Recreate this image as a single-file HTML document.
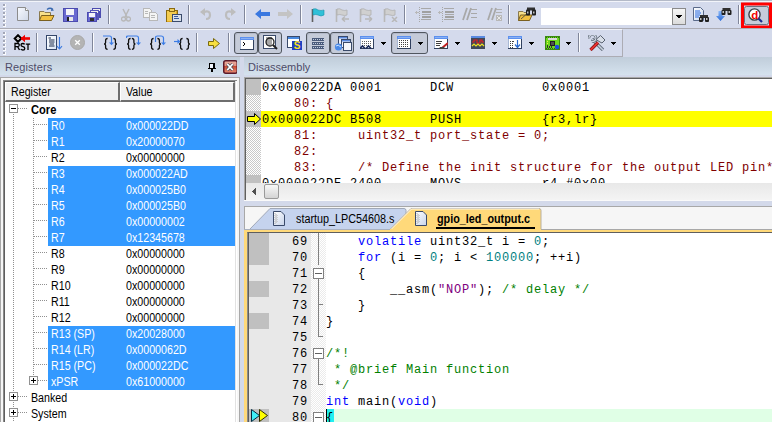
<!DOCTYPE html><html><head><meta charset="utf-8"><title>uVision</title><style>
*{margin:0;padding:0;box-sizing:border-box}
html,body{width:772px;height:422px;overflow:hidden;background:#D3D9EA;font-family:"Liberation Sans",sans-serif;font-size:11px;color:#000}
body{position:relative}
div,span,svg{position:absolute;display:block}
i{font-style:normal}
.sep{width:1px;background:#80869A;border-right:1px solid #FAFBFE;box-sizing:content-box}
.ttl{background:linear-gradient(#C0CDDA,#D5E2EE);color:#4E4C68;font-size:11.5px}
.mono{font-family:"Liberation Mono",monospace;font-size:12px;letter-spacing:.8px;white-space:pre;line-height:16px;padding-top:1px}
.sans{white-space:pre;line-height:14px;transform-origin:0 0}
.rg{font-size:12px;transform:scaleX(.89)}
.chk{background-color:#fff;background-image:linear-gradient(45deg,#C8C8C8 25%,transparent 25%,transparent 75%,#C8C8C8 75%),linear-gradient(45deg,#C8C8C8 25%,transparent 25%,transparent 75%,#C8C8C8 75%);background-size:2px 2px;background-position:0 0,1px 1px}
</style></head><body>
<div style="left:0;top:0;width:772px;height:1px;background:#B4BAC8"></div>
<div style="left:0;top:1px;width:772px;height:28px;background:#D4DAEC;border-top:1px solid #F2F4FA;border-bottom:1px solid #ACACB4"></div>
<div style="left:0;top:29px;width:623px;height:28px;background:#D4DAEC;border-top:1px solid #F2F4FA;border-bottom:1px solid #ACACB4;border-right:1px solid #ACACB4"></div>
<div style="left:3px;top:4px;width:3px;height:3px;background:#FAFBFE"></div><div style="left:3px;top:4px;width:2px;height:2px;background:#A2A6B6"></div>
<div style="left:3px;top:8px;width:3px;height:3px;background:#FAFBFE"></div><div style="left:3px;top:8px;width:2px;height:2px;background:#A2A6B6"></div>
<div style="left:3px;top:12px;width:3px;height:3px;background:#FAFBFE"></div><div style="left:3px;top:12px;width:2px;height:2px;background:#A2A6B6"></div>
<div style="left:3px;top:16px;width:3px;height:3px;background:#FAFBFE"></div><div style="left:3px;top:16px;width:2px;height:2px;background:#A2A6B6"></div>
<div style="left:3px;top:20px;width:3px;height:3px;background:#FAFBFE"></div><div style="left:3px;top:20px;width:2px;height:2px;background:#A2A6B6"></div>
<div style="left:3px;top:24px;width:3px;height:3px;background:#FAFBFE"></div><div style="left:3px;top:24px;width:2px;height:2px;background:#A2A6B6"></div>
<div style="left:3px;top:32px;width:3px;height:3px;background:#FAFBFE"></div><div style="left:3px;top:32px;width:2px;height:2px;background:#A2A6B6"></div>
<div style="left:3px;top:36px;width:3px;height:3px;background:#FAFBFE"></div><div style="left:3px;top:36px;width:2px;height:2px;background:#A2A6B6"></div>
<div style="left:3px;top:40px;width:3px;height:3px;background:#FAFBFE"></div><div style="left:3px;top:40px;width:2px;height:2px;background:#A2A6B6"></div>
<div style="left:3px;top:44px;width:3px;height:3px;background:#FAFBFE"></div><div style="left:3px;top:44px;width:2px;height:2px;background:#A2A6B6"></div>
<div style="left:3px;top:48px;width:3px;height:3px;background:#FAFBFE"></div><div style="left:3px;top:48px;width:2px;height:2px;background:#A2A6B6"></div>
<div style="left:3px;top:52px;width:3px;height:3px;background:#FAFBFE"></div><div style="left:3px;top:52px;width:2px;height:2px;background:#A2A6B6"></div>
<div class="sep" style="left:108px;top:5px;height:19px"></div>
<div class="sep" style="left:188px;top:5px;height:19px"></div>
<div class="sep" style="left:244px;top:5px;height:19px"></div>
<div class="sep" style="left:300px;top:5px;height:19px"></div>
<div class="sep" style="left:404px;top:5px;height:19px"></div>
<div class="sep" style="left:508px;top:5px;height:19px"></div>
<div class="sep" style="left:738px;top:5px;height:19px"></div>
<div class="sep" style="left:36px;top:33px;height:19px"></div>
<div class="sep" style="left:92px;top:33px;height:19px"></div>
<div class="sep" style="left:196px;top:33px;height:19px"></div>
<div class="sep" style="left:228px;top:33px;height:19px"></div>
<div class="sep" style="left:578px;top:33px;height:19px"></div>
<svg style="left:16px;top:6px" width="14" height="16" viewBox="0 0 14 16"><defs><linearGradient id="gnd" x1="0" y1="0" x2="1" y2="1"><stop offset="0" stop-color="#F8FAFF"/><stop offset="1" stop-color="#D0D8E8"/></linearGradient></defs><path d="M1.5 1.5H9.5L12.5 4.5V14.5H1.5Z" fill="url(#gnd)" stroke="#8C8C8C"/><path d="M9.5 1.5V4.5H12.5" fill="#fff" stroke="#8C8C8C"/></svg>
<svg style="left:38px;top:7px" width="17" height="15" viewBox="0 0 17 15"><path d="M1.5 4.5H6L7 5.5H12.5V13.5H1.5Z" fill="#F8E08A" stroke="#8A7A50"/><path d="M3.5 8.5H16L13.5 13.5H1.5Z" fill="#F2C040" stroke="#7A6020"/><path d="M9 2.5Q12 0 15 2.5" fill="none" stroke="#3A6AB0" stroke-width="1.3"/><path d="M13.5 1L16 3.5L13 4Z" fill="#3A6AB0"/></svg>
<svg style="left:63px;top:8px" width="15" height="14" viewBox="0 0 15 14" shape-rendering="crispEdges"><rect x="0" y="0" width="15" height="14" fill="#4C4CB0"/><rect x="1" y="1" width="13" height="12" fill="#6A6AD0"/><rect x="3" y="1" width="8" height="6" fill="#F4F4F8"/><rect x="4" y="9" width="6" height="4" fill="#E8E8E8"/><rect x="4" y="9" width="2" height="4" fill="#202020"/></svg>
<svg style="left:87px;top:8px" width="14" height="14" viewBox="0 0 14 14" shape-rendering="crispEdges"><rect x="5" y="0" width="9" height="10" fill="#4C4CB0"/><rect x="6" y="1" width="7" height="2" fill="#EEE"/><rect x="3" y="2" width="9" height="10" fill="#5656B8"/><rect x="4" y="3" width="7" height="2" fill="#EEE"/><rect x="0" y="4" width="10" height="10" fill="#4C4CB0"/><rect x="1" y="5" width="8" height="8" fill="#6A6AD0"/><rect x="2" y="5" width="6" height="4" fill="#F4F4F8"/><rect x="3" y="10" width="4" height="3" fill="#303030"/></svg>
<svg style="left:121px;top:8px" width="10" height="14" viewBox="0 0 10 14"><path d="M2 1L6 9M8 1L4 9" stroke="#B8B8B8" stroke-width="1.5"/><circle cx="2.5" cy="11" r="2" fill="none" stroke="#B8B8B8" stroke-width="1.3"/><circle cx="7.5" cy="11" r="2" fill="none" stroke="#B8B8B8" stroke-width="1.3"/></svg>
<svg style="left:143px;top:8px" width="15" height="13" viewBox="0 0 15 13" shape-rendering="crispEdges"><path d="M0 0H6L8 2V9H0Z" fill="#F4F4F4" stroke="#B8B8B8"/><path d="M6 4H12L14 6V12H6Z" fill="#F4F4F4" stroke="#B8B8B8"/><path d="M8 7H12M8 9H12M2 3H5M2 5H5" stroke="#B8B8B8"/></svg>
<svg style="left:166px;top:8px" width="16" height="14" viewBox="0 0 16 14" shape-rendering="crispEdges"><rect x="0" y="2" width="11" height="12" fill="#E0A820" stroke="#8A6A10"/><rect x="1" y="3" width="9" height="10" fill="#F4CC50"/><rect x="3" y="0" width="5" height="3" fill="#F0D060" stroke="#8A6A10"/><rect x="6" y="6" width="9" height="7" fill="#D8E0EA" stroke="#3A4A6A"/><path d="M8 8H12M8 10H13" stroke="#3A5A9A"/></svg>
<svg style="left:200px;top:8px" width="12" height="13" viewBox="0 0 12 13"><g ><path d="M4 4Q10 2 10 7Q10 11 6 11" fill="none" stroke="#BDBDBD" stroke-width="2.2"/><path d="M0 4L5 0V8Z" fill="#BDBDBD"/></g></svg>
<svg style="left:224px;top:8px" width="12" height="13" viewBox="0 0 12 13"><g transform="translate(12 0) scale(-1 1)"><path d="M4 4Q10 2 10 7Q10 11 6 11" fill="none" stroke="#BDBDBD" stroke-width="2.2"/><path d="M0 4L5 0V8Z" fill="#BDBDBD"/></g></svg>
<svg style="left:255px;top:9px" width="15" height="10" viewBox="0 0 15 10"><path d="M0 5L6 0V3H15V7H6V10Z" fill="#3A78E0"/></svg>
<svg style="left:278px;top:9px" width="15" height="10" viewBox="0 0 15 10"><path d="M15 5L9 0V3H0V7H9V10Z" fill="#C4C4C4"/></svg>
<svg style="left:311px;top:8px" width="14" height="14" viewBox="0 0 14 14"><path d="M1.5 1V14" stroke="#606060" stroke-width="1.6"/><path d="M2 1Q5 0 7 2Q10 3 13 2V7Q10 9 7 7Q5 6 2 7Z" fill="#30C0D8" stroke="#1890A8" stroke-width=".6"/></svg>
<svg style="left:335px;top:8px" width="15" height="14" viewBox="0 0 15 14"><path d="M1.5 1V14" stroke="#B8B8B8" stroke-width="1.6"/><path d="M2 1Q5 0 7 2Q10 3 12 2V7Q10 8 7 7Q5 6 2 7Z" fill="#D0D0D0" stroke="#B0B0B0" stroke-width=".8"/><path d="M7 11H14M7 11L10 8.5M7 11L10 13.5" stroke="#B8B8B8" stroke-width="1.5" fill="none"/></svg>
<svg style="left:359px;top:8px" width="15" height="14" viewBox="0 0 15 14"><path d="M1.5 1V14" stroke="#B8B8B8" stroke-width="1.6"/><path d="M2 1Q5 0 7 2Q10 3 12 2V7Q10 8 7 7Q5 6 2 7Z" fill="#D0D0D0" stroke="#B0B0B0" stroke-width=".8"/><path d="M6 11H13M13 11L10 8.5M13 11L10 13.5" stroke="#B8B8B8" stroke-width="1.5" fill="none"/></svg>
<svg style="left:383px;top:8px" width="15" height="14" viewBox="0 0 15 14"><path d="M1.5 1V14" stroke="#B8B8B8" stroke-width="1.6"/><path d="M2 1Q5 0 7 2Q10 3 12 2V7Q10 8 7 7Q5 6 2 7Z" fill="#D0D0D0" stroke="#B0B0B0" stroke-width=".8"/><path d="M9 9L14 14M14 9L9 14" stroke="#B8B8B8" stroke-width="1.5"/></svg>
<svg style="left:415px;top:7px" width="16" height="15" viewBox="0 0 16 15" shape-rendering="crispEdges"><rect x="6" y="1" width="10" height="1" fill="#A8A8A8"/><rect x="7" y="4" width="9" height="2" fill="#A0A0A0"/><rect x="7" y="7" width="9" height="1" fill="#A8A8A8"/><rect x="7" y="9" width="9" height="2" fill="#A0A0A0"/><rect x="6" y="12" width="10" height="1" fill="#A8A8A8"/><rect x="0" y="5" width="4" height="1" fill="#B8B8B8"/><rect x="1" y="4" width="1" height="3" fill="#B8B8B8"/><rect x="4" y="0" width="1" height="1" fill="#A8A8A8"/><rect x="4" y="2" width="1" height="1" fill="#A8A8A8"/><rect x="4" y="4" width="1" height="1" fill="#A8A8A8"/><rect x="4" y="6" width="1" height="1" fill="#A8A8A8"/><rect x="4" y="8" width="1" height="1" fill="#A8A8A8"/><rect x="4" y="10" width="1" height="1" fill="#A8A8A8"/><rect x="4" y="12" width="1" height="1" fill="#A8A8A8"/><rect x="4" y="14" width="1" height="1" fill="#A8A8A8"/></svg>
<svg style="left:438px;top:7px" width="16" height="15" viewBox="0 0 16 15" shape-rendering="crispEdges"><rect x="6" y="1" width="10" height="1" fill="#A8A8A8"/><rect x="7" y="4" width="9" height="2" fill="#A0A0A0"/><rect x="7" y="7" width="9" height="1" fill="#A8A8A8"/><rect x="7" y="9" width="9" height="2" fill="#A0A0A0"/><rect x="6" y="12" width="10" height="1" fill="#A8A8A8"/><rect x="0" y="5" width="4" height="1" fill="#B8B8B8"/><rect x="1" y="4" width="1" height="3" fill="#B8B8B8"/><rect x="4" y="0" width="1" height="1" fill="#A8A8A8"/><rect x="4" y="2" width="1" height="1" fill="#A8A8A8"/><rect x="4" y="4" width="1" height="1" fill="#A8A8A8"/><rect x="4" y="6" width="1" height="1" fill="#A8A8A8"/><rect x="4" y="8" width="1" height="1" fill="#A8A8A8"/><rect x="4" y="10" width="1" height="1" fill="#A8A8A8"/><rect x="4" y="12" width="1" height="1" fill="#A8A8A8"/><rect x="4" y="14" width="1" height="1" fill="#A8A8A8"/></svg>
<svg style="left:462px;top:7px" width="16" height="14" viewBox="0 0 16 14"><path d="M1 13L5 1M5 13L9 1" stroke="#A8A8A8" stroke-width="1.8"/><path d="M9 2.5H15M9 6.5H15M9 10.5H15" stroke="#A8A8A8" stroke-width="1.2"/></svg>
<svg style="left:487px;top:7px" width="16" height="14" viewBox="0 0 16 14"><path d="M1 13L5 1M5 13L9 1" stroke="#A8A8A8" stroke-width="1.8"/><path d="M9 2.5H15M9 5.5H15" stroke="#B0B0B0" stroke-width="1"/><rect x="9" y="8" width="6" height="6" fill="#B8B8B8"/><path d="M10 9L14 13M14 9L10 13" stroke="#E8E8E8" stroke-width="1"/></svg>
<svg style="left:518px;top:7px" width="18" height="15" viewBox="0 0 18 15"><path d="M0.5 4.5H5L6 5.5H11V13.5H0.5Z" fill="#F8E08A" stroke="#8A7A50"/><path d="M2.5 8H14L11.5 13.5H0.5Z" fill="#F2C040" stroke="#7A6020"/><path d="M3 12L12 4" stroke="#404040" stroke-width=".8"/><g transform="translate(13 4.5)"><rect x="-4" y="-4" width="8" height="3" fill="#303030"/><rect x="-5" y="-2" width="4" height="6" rx="1" fill="#202020"/><rect x="1" y="-2" width="4" height="6" rx="1" fill="#202020"/><rect x="-4" y="0" width="1.5" height="2" fill="#C0C0C0"/><rect x="2" y="0" width="1.5" height="2" fill="#C0C0C0"/></g></svg>
<div style="left:541px;top:8px;width:145px;height:17px;background:#fff"></div><div style="left:672px;top:8px;width:14px;height:17px;background:linear-gradient(#F6F6F6,#DCDCDC);border:1px solid #8A8A8A"></div><svg style="left:676px;top:15px" width="6" height="4" viewBox="0 0 6 4" shape-rendering="crispEdges"><path d="M0 0H6L3 4Z" fill="#000"/></svg>
<svg style="left:693px;top:7px" width="17" height="15" viewBox="0 0 17 15"><defs><linearGradient id="gff" x1="0" y1="0" x2="1" y2="1"><stop offset="0" stop-color="#fff"/><stop offset="1" stop-color="#C8D8F0"/></linearGradient></defs><path d="M0.5 0.5H7.5L10.5 3.5V13.5H0.5Z" fill="url(#gff)" stroke="#5A6A8A"/><path d="M2 4H7M2 6H8M2 8H7M2 10H6" stroke="#2A6AE0" stroke-width="1"/><g transform="translate(11 11) scale(1.0)"><rect x="-4" y="-3" width="8" height="3" fill="#303030"/><rect x="-5" y="-1" width="4" height="5" rx="1" fill="#202020"/><rect x="1" y="-1" width="4" height="5" rx="1" fill="#202020"/><rect x="-4" y="0" width="1.5" height="2" fill="#C0C0C0"/><rect x="2" y="0" width="1.5" height="2" fill="#C0C0C0"/></g></svg>
<svg style="left:716px;top:7px" width="17" height="15" viewBox="0 0 17 15"><defs><linearGradient id="gba" x1="0" y1="0" x2="0" y2="1"><stop offset="0" stop-color="#8AB8F8"/><stop offset="1" stop-color="#2A6AD8"/></linearGradient></defs><path d="M2.5 4H6.5V9H9L4.5 14L0 9H2.5Z" fill="url(#gba)"/><g transform="translate(10.5 4) scale(1.0)"><rect x="-4" y="-3" width="8" height="3" fill="#303030"/><rect x="-5" y="-1" width="4" height="5" rx="1" fill="#202020"/><rect x="1" y="-1" width="4" height="5" rx="1" fill="#202020"/><rect x="-4" y="0" width="1.5" height="2" fill="#C0C0C0"/><rect x="2" y="0" width="1.5" height="2" fill="#C0C0C0"/></g></svg>
<svg style="left:740px;top:2px" width="32" height="26" viewBox="0 0 32 26"><rect x="2.5" y="2" width="28" height="23" fill="none" stroke="#FF0000" stroke-width="3"/><rect x="4.5" y="4.5" width="24" height="18" rx="2" fill="#C6CCDA" stroke="#6A7280"/><circle cx="14.5" cy="12.5" r="5.6" fill="#fff" stroke="#3A4048" stroke-width="1.4"/><path d="M18.5 16.5L22 20" stroke="#1A2A90" stroke-width="2.2"/><text x="14.7" y="16.8" text-anchor="middle" font-family="Liberation Sans" font-weight="bold" font-size="11.5" fill="#F00000">d</text></svg>
<svg style="left:13px;top:34px" width="18" height="17" viewBox="0 0 18 17"><path d="M5 1.2L8.3 4.5L5 7.8L1.7 4.5Z" fill="#fff" stroke="#000" stroke-width="2"/><rect x="4" y="3.5" width="2" height="2" fill="#C0C0C0"/><path d="M8 4.5H17" stroke="#F00000" stroke-width="2.6"/><path d="M7.5 4.5L12 0.8V8.2Z" fill="#F00000"/><path d="M2 16V9.5H4.8Q6.3 9.5 6.3 11.1Q6.3 12.6 4.8 12.6H2M4.6 12.6L6.5 16" fill="none" stroke="#000" stroke-width="1.3"/><path d="M11.6 10.3Q11 9.5 9.8 9.5Q8 9.5 8 11Q8 12.3 9.9 12.6Q11.8 13 11.8 14.4Q11.8 16 9.9 16Q8.5 16 7.8 15" fill="none" stroke="#000" stroke-width="1.3"/><path d="M12.8 10.1H17.2M15 10.1V16" fill="none" stroke="#000" stroke-width="1.3"/></svg>
<svg style="left:46px;top:35px" width="17" height="15" viewBox="0 0 17 15"><defs><linearGradient id="gda" x1="0" y1="0" x2="1" y2="1"><stop offset="0" stop-color="#fff"/><stop offset="1" stop-color="#D8E4F4"/></linearGradient></defs><rect x="0.5" y="0.5" width="10" height="14" fill="url(#gda)" stroke="#34466A"/><path d="M2.5 3H5M3 5H8.5M3 7H8.5M3.5 9H8M3 11H8.5" stroke="#1A2A4A" stroke-width="1"/><path d="M13.5 2V14" stroke="#3A7AE0" stroke-width="1.1"/><path d="M11 11.2L13.5 14L16 11.2" fill="none" stroke="#3A7AE0" stroke-width="1.1"/></svg>
<svg style="left:70px;top:35px" width="15" height="15" viewBox="0 0 15 15"><circle cx="7.5" cy="7.5" r="7" fill="#B4B4B4" stroke="#A8A8A8"/><path d="M5.2 5.2L9.8 9.8M9.8 5.2L5.2 9.8" stroke="#fff" stroke-width="1.3"/></svg>
<svg style="left:103px;top:34px" width="17" height="17" viewBox="0 0 17 17"><path d="M4.6 4.5Q2.6 4.5 2.6 6.5V8.5Q2.6 9.8 1.2 10Q2.6 10.2 2.6 11.5V13.5Q2.6 15.3 4.6 15.3" fill="none" stroke="#101010" stroke-width="1.3"/><path d="M10.4 4.5Q12.4 4.5 12.4 6.5V8.5Q12.4 9.8 13.8 10Q12.4 10.2 12.4 11.5V13.5Q12.4 15.3 10.4 15.3" fill="none" stroke="#101010" stroke-width="1.3"/><path d="M0 2H6.5Q8.5 2 8.5 4V9" fill="none" stroke="#3C7DE6" stroke-width="1.2"/><path d="M6 8.5H11L8.5 11.2Z" fill="#3C7DE6"/></svg>
<svg style="left:126px;top:34px" width="17" height="17" viewBox="0 0 17 17"><path d="M4.6 4.5Q2.6 4.5 2.6 6.5V8.5Q2.6 9.8 1.2 10Q2.6 10.2 2.6 11.5V13.5Q2.6 15.3 4.6 15.3" fill="none" stroke="#101010" stroke-width="1.3"/><path d="M5.9 4.5Q7.9 4.5 7.9 6.5V8.5Q7.9 9.8 9.3 10Q7.9 10.2 7.9 11.5V13.5Q7.9 15.3 5.9 15.3" fill="none" stroke="#101010" stroke-width="1.3"/><path d="M0.5 4V3Q0.5 2 2 2H10.5Q12.5 2 12.5 4V9" fill="none" stroke="#3C7DE6" stroke-width="1.2"/><path d="M10 8.5H15L12.5 11.2Z" fill="#3C7DE6"/></svg>
<svg style="left:150px;top:34px" width="17" height="17" viewBox="0 0 17 17"><path d="M3.6 4.5Q1.6 4.5 1.6 6.5V8.5Q1.6 9.8 0.2 10Q1.6 10.2 1.6 11.5V13.5Q1.6 15.3 3.6 15.3" fill="none" stroke="#101010" stroke-width="1.3"/><path d="M7.4 4.5Q9.4 4.5 9.4 6.5V8.5Q9.4 9.8 10.8 10Q9.4 10.2 9.4 11.5V13.5Q9.4 15.3 7.4 15.3" fill="none" stroke="#101010" stroke-width="1.3"/><path d="M5.5 8V4Q5.5 2 7.5 2H11Q13.5 2 13.5 4V9" fill="none" stroke="#3C7DE6" stroke-width="1.2"/><path d="M11 8.5H16L13.5 11.2Z" fill="#3C7DE6"/></svg>
<svg style="left:174px;top:34px" width="17" height="17" viewBox="0 0 17 17"><path d="M8.6 4.5Q6.6 4.5 6.6 6.5V8.5Q6.6 9.8 5.2 10Q6.6 10.2 6.6 11.5V13.5Q6.6 15.3 8.6 15.3" fill="none" stroke="#101010" stroke-width="1.3"/><path d="M12.4 4.5Q14.4 4.5 14.4 6.5V8.5Q14.4 9.8 15.8 10Q14.4 10.2 14.4 11.5V13.5Q14.4 15.3 12.4 15.3" fill="none" stroke="#101010" stroke-width="1.3"/><path d="M0 7.5H5" fill="none" stroke="#3C7DE6" stroke-width="1.2"/><path d="M3.5 5L6.5 7.5L3.5 10Z" fill="#3C7DE6"/></svg>
<svg style="left:208px;top:38px" width="12" height="11" viewBox="0 0 12 11"><path d="M0.5 3.5H5.5V0.5L11.5 5.5L5.5 10.5V7.5H0.5Z" fill="#F8E040" stroke="#7A6A10"/></svg>
<div style="left:234px;top:32px;width:24px;height:22px;border:1px solid #50565F;border-radius:3px;background:#C5CBD9;box-shadow:inset 1px 1px 0 #B4BACA"></div>
<div style="left:258px;top:32px;width:24px;height:22px;border:1px solid #50565F;border-radius:3px;background:#C5CBD9;box-shadow:inset 1px 1px 0 #B4BACA"></div>
<div style="left:306px;top:32px;width:24px;height:22px;border:1px solid #50565F;border-radius:3px;background:#C5CBD9;box-shadow:inset 1px 1px 0 #B4BACA"></div>
<div style="left:330px;top:32px;width:24px;height:22px;border:1px solid #50565F;border-radius:3px;background:#C5CBD9;box-shadow:inset 1px 1px 0 #B4BACA"></div>
<div style="left:391px;top:32px;width:37px;height:22px;border:1px solid #50565F;border-radius:3px;background:#C5CBD9;box-shadow:inset 1px 1px 0 #B4BACA"></div>
<svg style="left:240px;top:37px" width="14" height="13" viewBox="0 0 14 13" shape-rendering="crispEdges"><rect x="0" y="0" width="14" height="13" fill="#30405E"/><rect x="0" y="0" width="13" height="12" fill="#A8B8D4"/><rect x="1" y="3" width="12" height="9" fill="#fff"/><rect x="0" y="0" width="14" height="3" fill="#5C90EE"/><rect x="1" y="1" width="12" height="1" fill="#8AB0F4"/><path d="M3 5L5 7L3 9" fill="none" stroke="#000" shape-rendering="auto"/></svg>
<svg style="left:263px;top:35px" width="15" height="15" viewBox="0 0 15 15"><rect x="0.5" y="0.5" width="12" height="13" fill="#fff" stroke="#3A4A6A"/><path d="M3 3H9M3 5H9M3 7H9M3 9H9" stroke="#505050"/><circle cx="7" cy="7" r="4" fill="none" stroke="#202020" stroke-width="1.3"/><path d="M10 10L14 14" stroke="#202020" stroke-width="2"/></svg>
<svg style="left:287px;top:36px" width="15" height="14" viewBox="0 0 15 14"><rect x="0.5" y="0.5" width="12" height="11" fill="#fff" stroke="#3A4A6A"/><rect x="1" y="1" width="11" height="2" fill="#4A8AE0"/><rect x="5" y="5" width="10" height="9" fill="#2040C0"/><text x="10" y="13" text-anchor="middle" font-family="Liberation Sans" font-weight="bold" font-size="10" fill="#F8E020">S</text></svg>
<svg style="left:311px;top:37px" width="14" height="13" viewBox="0 0 14 13" shape-rendering="crispEdges"><rect x="1" y="1" width="12" height="3" fill="#4A5A7A"/><rect x="1" y="5" width="12" height="3" fill="#4A5A7A"/><rect x="1" y="9" width="12" height="3" fill="#4A5A7A"/><rect x="2" y="2" width="1" height="1" fill="#C0CCE0"/><rect x="4" y="2" width="1" height="1" fill="#C0CCE0"/><rect x="6" y="2" width="1" height="1" fill="#C0CCE0"/><rect x="8" y="2" width="1" height="1" fill="#C0CCE0"/><rect x="10" y="2" width="1" height="1" fill="#C0CCE0"/><rect x="12" y="2" width="1" height="1" fill="#C0CCE0"/><rect x="2" y="6" width="1" height="1" fill="#C0CCE0"/><rect x="4" y="6" width="1" height="1" fill="#C0CCE0"/><rect x="6" y="6" width="1" height="1" fill="#C0CCE0"/><rect x="8" y="6" width="1" height="1" fill="#C0CCE0"/><rect x="10" y="6" width="1" height="1" fill="#C0CCE0"/><rect x="12" y="6" width="1" height="1" fill="#C0CCE0"/><rect x="2" y="10" width="1" height="1" fill="#C0CCE0"/><rect x="4" y="10" width="1" height="1" fill="#C0CCE0"/><rect x="6" y="10" width="1" height="1" fill="#C0CCE0"/><rect x="8" y="10" width="1" height="1" fill="#C0CCE0"/><rect x="10" y="10" width="1" height="1" fill="#C0CCE0"/><rect x="12" y="10" width="1" height="1" fill="#C0CCE0"/></svg>
<svg style="left:334px;top:35px" width="18" height="17" viewBox="0 0 18 17"><rect x="4.5" y="1.5" width="9" height="8" fill="#EEF2FA" stroke="#3A4A6A"/><rect x="5" y="2" width="8" height="1.5" fill="#5A8AE0"/><rect x="7.5" y="4.5" width="9" height="8" fill="#EEF2FA" stroke="#3A4A6A"/><rect x="8" y="5" width="8" height="1.5" fill="#5A8AE0"/><rect x="9.5" y="7.5" width="8" height="8" fill="#F4F6FA" stroke="#3A4A6A"/><circle cx="4.5" cy="12" r="3.6" fill="#4A8AE8"/><path d="M2 11Q4 9 7 12" stroke="#C8E0FF" fill="none"/></svg>
<svg style="left:360px;top:36px" width="14" height="13" viewBox="0 0 14 13" shape-rendering="crispEdges"><rect x="0" y="0" width="14" height="13" fill="#30405E"/><rect x="0" y="0" width="13" height="12" fill="#A8B8D4"/><rect x="1" y="3" width="12" height="9" fill="#fff"/><rect x="0" y="0" width="14" height="3" fill="#5C90EE"/><rect x="1" y="1" width="12" height="1" fill="#8AB0F4"/><rect x="2" y="5" width="1" height="1" fill="#606060"/><rect x="2" y="7" width="1" height="1" fill="#606060"/><rect x="2" y="9" width="1" height="1" fill="#606060"/><rect x="4" y="5" width="1" height="1" fill="#606060"/><rect x="4" y="7" width="1" height="1" fill="#606060"/><rect x="4" y="9" width="1" height="1" fill="#606060"/><rect x="6" y="5" width="1" height="1" fill="#606060"/><rect x="6" y="7" width="1" height="1" fill="#606060"/><rect x="6" y="9" width="1" height="1" fill="#606060"/><rect x="8" y="5" width="1" height="1" fill="#606060"/><rect x="8" y="7" width="1" height="1" fill="#606060"/><rect x="8" y="9" width="1" height="1" fill="#606060"/><rect x="10" y="5" width="1" height="1" fill="#606060"/><rect x="10" y="7" width="1" height="1" fill="#606060"/><rect x="10" y="9" width="1" height="1" fill="#606060"/><path d="M0 12.5L2.5 10L5 12.5M6 12.5L8.5 10L11 12.5" fill="none" stroke="#1A2A5A" stroke-width="1.6" shape-rendering="auto"/></svg>
<svg style="left:381px;top:42px" width="5" height="3" viewBox="0 0 5 3" shape-rendering="crispEdges"><path d="M0 0H5L2.5 3Z" fill="#000"/></svg>
<svg style="left:397px;top:36px" width="14" height="13" viewBox="0 0 14 13" shape-rendering="crispEdges"><rect x="0" y="0" width="14" height="13" fill="#30405E"/><rect x="0" y="0" width="13" height="12" fill="#A8B8D4"/><rect x="1" y="3" width="12" height="9" fill="#fff"/><rect x="0" y="0" width="14" height="3" fill="#5C90EE"/><rect x="1" y="1" width="12" height="1" fill="#8AB0F4"/><rect x="2" y="4" width="1" height="1" fill="#404040"/><rect x="2" y="6" width="1" height="1" fill="#404040"/><rect x="2" y="8" width="1" height="1" fill="#404040"/><rect x="2" y="10" width="1" height="1" fill="#404040"/><rect x="4" y="4" width="1" height="1" fill="#404040"/><rect x="4" y="6" width="1" height="1" fill="#404040"/><rect x="4" y="8" width="1" height="1" fill="#404040"/><rect x="4" y="10" width="1" height="1" fill="#404040"/><rect x="6" y="4" width="1" height="1" fill="#404040"/><rect x="6" y="6" width="1" height="1" fill="#404040"/><rect x="6" y="8" width="1" height="1" fill="#404040"/><rect x="6" y="10" width="1" height="1" fill="#404040"/><rect x="8" y="4" width="1" height="1" fill="#404040"/><rect x="8" y="6" width="1" height="1" fill="#404040"/><rect x="8" y="8" width="1" height="1" fill="#404040"/><rect x="8" y="10" width="1" height="1" fill="#404040"/><rect x="10" y="4" width="1" height="1" fill="#404040"/><rect x="10" y="6" width="1" height="1" fill="#404040"/><rect x="10" y="8" width="1" height="1" fill="#404040"/><rect x="10" y="10" width="1" height="1" fill="#404040"/></svg>
<svg style="left:418px;top:42px" width="5" height="3" viewBox="0 0 5 3" shape-rendering="crispEdges"><path d="M0 0H5L2.5 3Z" fill="#000"/></svg>
<svg style="left:434px;top:36px" width="14" height="13" viewBox="0 0 14 13" shape-rendering="crispEdges"><rect x="0" y="0" width="14" height="13" fill="#30405E"/><rect x="0" y="0" width="13" height="12" fill="#A8B8D4"/><rect x="1" y="3" width="12" height="9" fill="#fff"/><rect x="0" y="0" width="14" height="3" fill="#5C90EE"/><rect x="1" y="1" width="12" height="1" fill="#8AB0F4"/><rect x="2" y="5" width="6" height="1" fill="#404040"/><rect x="2" y="7" width="5" height="1" fill="#404040"/><rect x="2" y="9" width="4" height="1" fill="#404040"/><path d="M8 12L14 7" stroke="#C02020" stroke-width="2" shape-rendering="auto"/><path d="M4 14H12L10 11H6Z" fill="#404040" shape-rendering="auto"/></svg>
<svg style="left:455px;top:42px" width="5" height="3" viewBox="0 0 5 3" shape-rendering="crispEdges"><path d="M0 0H5L2.5 3Z" fill="#000"/></svg>
<svg style="left:471px;top:36px" width="14" height="13" viewBox="0 0 14 13"><rect x="0" y="0" width="14" height="13" fill="#404858"/><rect x="0" y="0" width="14" height="2" fill="#5A8AE0"/><path d="M1 6H3V4H6V7H9V4H11V6H13" fill="none" stroke="#E02020" stroke-width="1.2"/><path d="M1 10L3 8L5 10L7 8L9 10L11 8L13 10" fill="none" stroke="#F0E020" stroke-width="1.2"/></svg>
<svg style="left:492px;top:42px" width="5" height="3" viewBox="0 0 5 3" shape-rendering="crispEdges"><path d="M0 0H5L2.5 3Z" fill="#000"/></svg>
<svg style="left:508px;top:36px" width="14" height="13" viewBox="0 0 14 13" shape-rendering="crispEdges"><rect x="0" y="0" width="14" height="13" fill="#30405E"/><rect x="0" y="0" width="13" height="12" fill="#A8B8D4"/><rect x="1" y="3" width="12" height="9" fill="#fff"/><rect x="0" y="0" width="14" height="3" fill="#5C90EE"/><rect x="1" y="1" width="12" height="1" fill="#8AB0F4"/><rect x="2" y="5" width="1" height="1" fill="#404040"/><rect x="2" y="7" width="1" height="1" fill="#404040"/><rect x="2" y="9" width="1" height="1" fill="#404040"/><rect x="2" y="11" width="1" height="1" fill="#404040"/><rect x="4" y="5" width="1" height="1" fill="#404040"/><rect x="4" y="7" width="1" height="1" fill="#404040"/><rect x="4" y="9" width="1" height="1" fill="#404040"/><rect x="4" y="11" width="1" height="1" fill="#404040"/><rect x="4" y="5" width="2" height="1" fill="#404040"/><path d="M9.5 4V11M7 8.5L9.5 11.5L12 8.5" fill="none" stroke="#2A6AD0" stroke-width="1.2" shape-rendering="auto"/></svg>
<svg style="left:529px;top:42px" width="5" height="3" viewBox="0 0 5 3" shape-rendering="crispEdges"><path d="M0 0H5L2.5 3Z" fill="#000"/></svg>
<svg style="left:545px;top:36px" width="15" height="14" viewBox="0 0 15 14" shape-rendering="crispEdges"><rect x="0" y="0" width="15" height="14" fill="#3A8A10"/><rect x="1" y="1" width="13" height="12" fill="#6CD820"/><rect x="1" y="1" width="1" height="1" fill="#2A6A10"/><rect x="3" y="1" width="1" height="1" fill="#2A6A10"/><rect x="5" y="1" width="1" height="1" fill="#2A6A10"/><rect x="7" y="1" width="1" height="1" fill="#2A6A10"/><rect x="9" y="1" width="1" height="1" fill="#2A6A10"/><rect x="11" y="1" width="1" height="1" fill="#2A6A10"/><rect x="13" y="1" width="1" height="1" fill="#2A6A10"/><rect x="1" y="12" width="1" height="1" fill="#2A6A10"/><rect x="3" y="12" width="1" height="1" fill="#2A6A10"/><rect x="5" y="12" width="1" height="1" fill="#2A6A10"/><rect x="7" y="12" width="1" height="1" fill="#2A6A10"/><rect x="9" y="12" width="1" height="1" fill="#2A6A10"/><rect x="11" y="12" width="1" height="1" fill="#2A6A10"/><rect x="13" y="12" width="1" height="1" fill="#2A6A10"/><rect x="3" y="2" width="9" height="2" fill="#D8D8D8"/><rect x="2" y="5" width="1" height="1" fill="#F0F040"/><rect x="2" y="7" width="1" height="1" fill="#F0F040"/><rect x="5" y="5" width="5" height="5" fill="#202020"/><rect x="6" y="6" width="3" height="3" fill="#505050"/><rect x="2" y="9" width="1" height="3" fill="#303030"/><rect x="4" y="10" width="1" height="2" fill="#303030"/><rect x="6" y="10" width="1" height="2" fill="#303030"/><circle cx="12" cy="11" r="2.2" fill="#1A4AE8" shape-rendering="auto"/></svg>
<svg style="left:566px;top:42px" width="5" height="3" viewBox="0 0 5 3" shape-rendering="crispEdges"><path d="M0 0H5L2.5 3Z" fill="#000"/></svg>
<svg style="left:588px;top:35px" width="18" height="16" viewBox="0 0 18 16"><path d="M4 4L15 15" stroke="#606A78" stroke-width="3.2"/><path d="M4 4L15 15" stroke="#C8D0DC" stroke-width="1.6"/><path d="M1 3.5A3.5 3.5 0 1 1 4 6.5" fill="none" stroke="#606A78" stroke-width="2.6"/><path d="M1 3.5A3.5 3.5 0 1 1 4 6.5" fill="none" stroke="#D0D8E4" stroke-width="1.2"/><path d="M2.5 15L10 7.5" stroke="#7A1010" stroke-width="3.2"/><path d="M2.5 15L10 7.5" stroke="#E83030" stroke-width="1.8"/><path d="M8 4.5L12.5 0.5L17 5L14 8L12 7Z" fill="#D8DEE8" stroke="#5A6270" stroke-width="1"/></svg>
<svg style="left:611px;top:42px" width="5" height="3" viewBox="0 0 5 3" shape-rendering="crispEdges"><path d="M0 0H5L2.5 3Z" fill="#000"/></svg>
<div class="ttl" style="left:0;top:57px;width:240px;height:18px"><span class="sans" style="left:5px;top:3px;font-size:11px;letter-spacing:.1px">Registers</span></div>
<svg style="left:208px;top:63px" width="8" height="9" viewBox="0 0 8 9" shape-rendering="crispEdges"><rect x="1" y="0" width="6" height="1" fill="#000"/><rect x="1" y="0" width="1" height="5" fill="#000"/><rect x="5" y="0" width="2" height="5" fill="#000"/><rect x="2" y="1" width="3" height="4" fill="#F4F8FF"/><rect x="0" y="5" width="8" height="1" fill="#000"/><rect x="3" y="6" width="2" height="3" fill="#000"/></svg>
<svg style="left:223px;top:60px" width="14" height="14" viewBox="0 0 14 14"><defs><linearGradient id="gcl" x1="0" y1="0" x2="0" y2="1"><stop offset="0" stop-color="#ECB0A0"/><stop offset=".42" stop-color="#E09080"/><stop offset=".45" stop-color="#C84A30"/><stop offset="1" stop-color="#E89078"/></linearGradient></defs><rect x="0.75" y="0.75" width="13.5" height="12.5" rx="2" fill="url(#gcl)" stroke="#5A1828" stroke-width="1.5"/><path d="M4.3 4L9.7 10M9.7 4L4.3 10" stroke="#404A58" stroke-width="3.2"/><path d="M4.3 4L9.7 10M9.7 4L4.3 10" stroke="#fff" stroke-width="1.8"/></svg>
<div style="left:0;top:77px;width:240px;height:345px;background:#F6F6F6;border-top:1px solid #A8A8A8;border-left:1px solid #A8A8A8;border-right:1px solid #A8A8A8"></div>
<div style="left:3px;top:80px;width:234px;height:342px;background:#fff;border-left:1px solid #8A8A8A;border-top:1px solid #8A8A8A"></div>
<div style="left:4px;top:81px;width:232px;height:341px;background:#fff;border-left:1px solid #5E5E5E;border-top:1px solid #5E5E5E"></div>
<div style="left:235px;top:81px;width:1px;height:341px;background:#E2E2E2"></div>
<div style="left:5px;top:82px;width:115px;height:20px;background:#F0F0F0;border-style:solid;border-width:1px 2px 2px 1px;border-color:#fff #6E6E6E #6E6E6E #fff"><span class="sans rg" style="left:5px;top:2px">Register</span></div>
<div style="left:120px;top:82px;width:115px;height:20px;background:#F0F0F0;border-style:solid;border-width:1px 2px 2px 1px;border-color:#fff #6E6E6E #6E6E6E #fff"><span class="sans rg" style="left:5px;top:2px">Value</span></div>
<div style="left:13px;top:114px;width:1px;height:320px;background:repeating-linear-gradient(#909090 0 1px,transparent 1px 2px)"></div>
<div style="left:33px;top:118px;width:1px;height:264px;background:repeating-linear-gradient(#909090 0 1px,transparent 1px 2px)"></div>
<div style="left:18px;top:108px;width:10px;height:1px;background:repeating-linear-gradient(90deg,#909090 0 1px,transparent 1px 2px)"></div>
<div style="left:9px;top:104px;width:9px;height:9px;background:#fff;border:1px solid #919191"></div><div style="left:11px;top:108px;width:5px;height:1px;background:#000"></div>
<span class="sans rg" style="left:31px;top:103px;font-weight:bold;font-size:12.5px">Core</span>
<div style="left:34px;top:124px;width:14px;height:1px;background:repeating-linear-gradient(90deg,#909090 0 1px,transparent 1px 2px)"></div>
<div style="left:48px;top:118px;width:187px;height:16px;background:#3399FF"></div>
<span style="left:51px;top:119px;color:#fff" class="sans rg">R0</span>
<span style="left:126px;top:119px;color:#fff" class="sans rg">0x000022DD</span>
<div style="left:34px;top:140px;width:14px;height:1px;background:repeating-linear-gradient(90deg,#909090 0 1px,transparent 1px 2px)"></div>
<div style="left:48px;top:134px;width:187px;height:16px;background:#3399FF"></div>
<span style="left:51px;top:135px;color:#fff" class="sans rg">R1</span>
<span style="left:126px;top:135px;color:#fff" class="sans rg">0x20000070</span>
<div style="left:34px;top:156px;width:14px;height:1px;background:repeating-linear-gradient(90deg,#909090 0 1px,transparent 1px 2px)"></div>
<span style="left:51px;top:151px;color:#000" class="sans rg">R2</span>
<span style="left:126px;top:151px;color:#000" class="sans rg">0x00000000</span>
<div style="left:34px;top:172px;width:14px;height:1px;background:repeating-linear-gradient(90deg,#909090 0 1px,transparent 1px 2px)"></div>
<div style="left:48px;top:166px;width:187px;height:16px;background:#3399FF"></div>
<span style="left:51px;top:167px;color:#fff" class="sans rg">R3</span>
<span style="left:126px;top:167px;color:#fff" class="sans rg">0x000022AD</span>
<div style="left:34px;top:188px;width:14px;height:1px;background:repeating-linear-gradient(90deg,#909090 0 1px,transparent 1px 2px)"></div>
<div style="left:48px;top:182px;width:187px;height:16px;background:#3399FF"></div>
<span style="left:51px;top:183px;color:#fff" class="sans rg">R4</span>
<span style="left:126px;top:183px;color:#fff" class="sans rg">0x000025B0</span>
<div style="left:34px;top:204px;width:14px;height:1px;background:repeating-linear-gradient(90deg,#909090 0 1px,transparent 1px 2px)"></div>
<div style="left:48px;top:198px;width:187px;height:16px;background:#3399FF"></div>
<span style="left:51px;top:199px;color:#fff" class="sans rg">R5</span>
<span style="left:126px;top:199px;color:#fff" class="sans rg">0x000025B0</span>
<div style="left:34px;top:220px;width:14px;height:1px;background:repeating-linear-gradient(90deg,#909090 0 1px,transparent 1px 2px)"></div>
<div style="left:48px;top:214px;width:187px;height:16px;background:#3399FF"></div>
<span style="left:51px;top:215px;color:#fff" class="sans rg">R6</span>
<span style="left:126px;top:215px;color:#fff" class="sans rg">0x00000002</span>
<div style="left:34px;top:236px;width:14px;height:1px;background:repeating-linear-gradient(90deg,#909090 0 1px,transparent 1px 2px)"></div>
<div style="left:48px;top:230px;width:187px;height:16px;background:#3399FF"></div>
<span style="left:51px;top:231px;color:#fff" class="sans rg">R7</span>
<span style="left:126px;top:231px;color:#fff" class="sans rg">0x12345678</span>
<div style="left:34px;top:252px;width:14px;height:1px;background:repeating-linear-gradient(90deg,#909090 0 1px,transparent 1px 2px)"></div>
<span style="left:51px;top:247px;color:#000" class="sans rg">R8</span>
<span style="left:126px;top:247px;color:#000" class="sans rg">0x00000000</span>
<div style="left:34px;top:268px;width:14px;height:1px;background:repeating-linear-gradient(90deg,#909090 0 1px,transparent 1px 2px)"></div>
<span style="left:51px;top:263px;color:#000" class="sans rg">R9</span>
<span style="left:126px;top:263px;color:#000" class="sans rg">0x00000000</span>
<div style="left:34px;top:284px;width:14px;height:1px;background:repeating-linear-gradient(90deg,#909090 0 1px,transparent 1px 2px)"></div>
<span style="left:51px;top:279px;color:#000" class="sans rg">R10</span>
<span style="left:126px;top:279px;color:#000" class="sans rg">0x00000000</span>
<div style="left:34px;top:300px;width:14px;height:1px;background:repeating-linear-gradient(90deg,#909090 0 1px,transparent 1px 2px)"></div>
<span style="left:51px;top:295px;color:#000" class="sans rg">R11</span>
<span style="left:126px;top:295px;color:#000" class="sans rg">0x00000000</span>
<div style="left:34px;top:316px;width:14px;height:1px;background:repeating-linear-gradient(90deg,#909090 0 1px,transparent 1px 2px)"></div>
<span style="left:51px;top:311px;color:#000" class="sans rg">R12</span>
<span style="left:126px;top:311px;color:#000" class="sans rg">0x00000000</span>
<div style="left:34px;top:332px;width:14px;height:1px;background:repeating-linear-gradient(90deg,#909090 0 1px,transparent 1px 2px)"></div>
<div style="left:48px;top:326px;width:187px;height:16px;background:#3399FF"></div>
<span style="left:51px;top:327px;color:#fff" class="sans rg">R13 (SP)</span>
<span style="left:126px;top:327px;color:#fff" class="sans rg">0x20028000</span>
<div style="left:34px;top:348px;width:14px;height:1px;background:repeating-linear-gradient(90deg,#909090 0 1px,transparent 1px 2px)"></div>
<div style="left:48px;top:342px;width:187px;height:16px;background:#3399FF"></div>
<span style="left:51px;top:343px;color:#fff" class="sans rg">R14 (LR)</span>
<span style="left:126px;top:343px;color:#fff" class="sans rg">0x0000062D</span>
<div style="left:34px;top:364px;width:14px;height:1px;background:repeating-linear-gradient(90deg,#909090 0 1px,transparent 1px 2px)"></div>
<div style="left:48px;top:358px;width:187px;height:16px;background:#3399FF"></div>
<span style="left:51px;top:359px;color:#fff" class="sans rg">R15 (PC)</span>
<span style="left:126px;top:359px;color:#fff" class="sans rg">0x000022DC</span>
<div style="left:34px;top:380px;width:14px;height:1px;background:repeating-linear-gradient(90deg,#909090 0 1px,transparent 1px 2px)"></div>
<div style="left:48px;top:374px;width:187px;height:16px;background:#3399FF"></div>
<span style="left:51px;top:375px;color:#fff" class="sans rg">xPSR</span>
<span style="left:126px;top:375px;color:#fff" class="sans rg">0x61000000</span>
<div style="left:29px;top:376px;width:9px;height:9px;background:#fff;border:1px solid #919191"></div><div style="left:31px;top:380px;width:5px;height:1px;background:#000"></div><div style="left:33px;top:378px;width:1px;height:5px;background:#000"></div>
<div style="left:18px;top:396px;width:10px;height:1px;background:repeating-linear-gradient(90deg,#909090 0 1px,transparent 1px 2px)"></div>
<div style="left:9px;top:392px;width:9px;height:9px;background:#fff;border:1px solid #919191"></div><div style="left:11px;top:396px;width:5px;height:1px;background:#000"></div><div style="left:13px;top:394px;width:1px;height:5px;background:#000"></div>
<span class="sans rg" style="left:31px;top:391px">Banked</span>
<div style="left:18px;top:412px;width:10px;height:1px;background:repeating-linear-gradient(90deg,#909090 0 1px,transparent 1px 2px)"></div>
<div style="left:9px;top:408px;width:9px;height:9px;background:#fff;border:1px solid #919191"></div><div style="left:11px;top:412px;width:5px;height:1px;background:#000"></div><div style="left:13px;top:410px;width:1px;height:5px;background:#000"></div>
<span class="sans rg" style="left:31px;top:407px">System</span>
<div class="ttl" style="left:244px;top:57px;width:528px;height:18px"><span class="sans" style="left:4px;top:3px;font-size:11px">Disassembly</span></div>
<div style="left:244px;top:77px;width:528px;height:124px;background:#fff;border-left:1px solid #A8A8A8;border-top:1px solid #A8A8A8"></div>
<div style="left:245px;top:78px;width:527px;height:122px;background:#fff;border-left:1px solid #606060;border-top:1px solid #606060"></div>
<div class="chk" style="left:246px;top:79px;width:15px;height:105px"></div>
<div style="left:246px;top:79px;width:15px;height:16px;background:#C0C0C0"></div>
<div style="left:246px;top:111px;width:15px;height:16px;background:#C0C0C0"></div>
<div style="left:246px;top:175px;width:15px;height:16px;background:#C0C0C0"></div>
<div style="left:261px;top:111px;width:511px;height:16px;background:#FFFF00"></div>
<div style="left:262px;top:79px;width:510px;height:105px;overflow:hidden">
<span class="mono" style="left:0;top:0px;color:#000">0x000022DA 0001      DCW           0x0001</span>
<span class="mono" style="left:0;top:16px;color:#800000">    80: {</span>
<span class="mono" style="left:0;top:32px;color:#000">0x000022DC B508      PUSH          {r3,lr}</span>
<span class="mono" style="left:0;top:48px;color:#800000">    81:     uint32_t port_state = 0;</span>
<span class="mono" style="left:0;top:64px;color:#800000">    82: </span>
<span class="mono" style="left:0;top:80px;color:#800000">    83:     /* Define the init structure for the output LED pin*/</span>
<span class="mono" style="left:0;top:96px;color:#000">0x000022DE 2400      MOVS          r4,#0x00</span>
</div>
<svg style="left:247px;top:113px" width="15" height="12" viewBox="0 0 15 12"><path d="M0.5 3.5H7.5V0.5L13.5 6L7.5 11.5V8.5H0.5Z" fill="#FFFF00" stroke="#000"/></svg>
<div style="left:246px;top:183px;width:526px;height:17px;background:linear-gradient(#E8E8E8,#F4F4F4)"></div>
<svg style="left:252px;top:188px" width="4" height="7" viewBox="0 0 4 7" shape-rendering="crispEdges"><path d="M4 0V7L0 3.5Z" fill="#505050"/></svg>
<div style="left:264px;top:184px;width:15px;height:15px;border:1px solid #9A9A9A;border-radius:2px;background:linear-gradient(#F8F8F8,#E6E6E6 50%,#D4D4D4)"></div>
<div style="left:244px;top:200px;width:528px;height:1px;background:#FAFAFA"></div>
<div style="left:244px;top:206px;width:528px;height:216px;background:#F6F6F6;border-left:1px solid #A8A8A8;border-top:1px solid #A8A8A8"></div>
<svg style="left:244px;top:207px" width="528" height="23" viewBox="0 0 528 23"><path d="M5.5 22.5L26 1.5H160Q162 1.5 162 3.5V22.5Z" fill="#C5D3EE" stroke="#A0A8B8"/><path d="M146 22.5L167 1.5H295Q297 1.5 297 3.5V22.5Z" fill="#FFD97A" stroke="#B8B0A0"/><path d="M147 22.5L167.5 2H295" fill="none" stroke="#fff" stroke-width=".8"/></svg>
<svg style="left:273px;top:211px" width="12" height="15" viewBox="0 0 12 15"><defs><linearGradient id="gdi" x1="0" y1="0" x2="1" y2="1"><stop offset="0" stop-color="#fff"/><stop offset="1" stop-color="#C8D4EA"/></linearGradient></defs><path d="M0.5 0.5H8L11.5 4V14.5H0.5Z" fill="url(#gdi)" stroke="#3A4A6A"/><path d="M2 2V13M3 3V12M4 4V11" fill="none" stroke="#B0B0B0" stroke-dasharray="1 1"/></svg>
<svg style="left:415px;top:211px" width="12" height="15" viewBox="0 0 12 15"><path d="M0.5 0.5H8L11.5 4V14.5H0.5Z" fill="url(#gdi)" stroke="#3A4A6A"/><path d="M2 2V13M3 3V12M4 4V11" fill="none" stroke="#B0B0B0" stroke-dasharray="1 1"/></svg>
<span class="sans" style="left:296px;top:212px;font-size:12px;transform:scaleX(.9)">startup_LPC54608.s</span>
<span class="sans" style="left:437px;top:212px;font-size:12px;font-weight:bold;transform:scaleX(.9)">gpio_led_output.c</span>
<div style="left:436px;top:227px;width:99px;height:2px;background:#000"></div>
<div style="left:244px;top:229px;width:146px;height:1px;background:#A8B0C0"></div><div style="left:541px;top:229px;width:231px;height:1px;background:#A8A8A8"></div><div style="left:244px;top:230px;width:528px;height:192px;background:#FFD97A"></div><div style="left:390px;top:229px;width:151px;height:1px;background:#FFD97A"></div>
<div style="left:247px;top:232px;width:525px;height:190px;background:#fff;border-left:1px solid #8A8A8A;border-top:1px solid #5E5E5E"></div><div style="left:248px;top:232px;width:1px;height:190px;background:#5E5E5E"></div>
<div style="left:249px;top:233px;width:62px;height:189px;background:#E8E8E8"></div>
<div style="left:249px;top:233px;width:20px;height:189px;background:#E8E8E8"></div>
<div style="left:249px;top:233px;width:20px;height:16px;background:#C0C0C0"></div>
<div style="left:249px;top:249px;width:20px;height:16px;background:#C0C0C0"></div>
<div style="left:249px;top:281px;width:20px;height:16px;background:#C0C0C0"></div>
<div style="left:249px;top:313px;width:20px;height:16px;background:#C0C0C0"></div>
<div style="left:249px;top:409px;width:20px;height:16px;background:#C0C0C0"></div>
<div class="chk" style="left:311px;top:233px;width:15px;height:189px;opacity:.35"></div>
<div style="left:326px;top:409px;width:446px;height:13px;background:#E0FFE6"></div>
<div style="left:326px;top:409px;width:8px;height:13px;background:#20F0F0"></div><div style="left:326px;top:409px;width:1px;height:13px;background:#000"></div>
<span class="mono" style="left:292px;top:233px;color:#000">69</span>
<span class="mono" style="left:326px;top:233px;color:#000">    <i style="color:#0000FF">volatile</i> uint32_t i = <i style="color:#008080">0</i>;</span>
<span class="mono" style="left:292px;top:249px;color:#000">70</span>
<span class="mono" style="left:326px;top:249px;color:#000">    <i style="color:#0000FF">for</i> (i = <i style="color:#008080">0</i>; i &lt; <i style="color:#008080">100000</i>; ++i)</span>
<span class="mono" style="left:292px;top:265px;color:#000">71</span>
<span class="mono" style="left:326px;top:265px;color:#000">    {</span>
<span class="mono" style="left:292px;top:281px;color:#000">72</span>
<span class="mono" style="left:326px;top:281px;color:#000">        __asm(<i style="color:#800080">"NOP"</i>); <i style="color:#008000">/* delay */</i></span>
<span class="mono" style="left:292px;top:297px;color:#000">73</span>
<span class="mono" style="left:326px;top:297px;color:#000">    }</span>
<span class="mono" style="left:292px;top:313px;color:#000">74</span>
<span class="mono" style="left:326px;top:313px;color:#000">}</span>
<span class="mono" style="left:292px;top:329px;color:#000">75</span>
<span class="mono" style="left:326px;top:329px;color:#000"></span>
<span class="mono" style="left:292px;top:345px;color:#000">76</span>
<span class="mono" style="left:326px;top:345px;color:#000"><i style="color:#008000">/*!</i></span>
<span class="mono" style="left:292px;top:361px;color:#000">77</span>
<span class="mono" style="left:326px;top:361px;color:#000"><i style="color:#008000"> * @brief Main function</i></span>
<span class="mono" style="left:292px;top:377px;color:#000">78</span>
<span class="mono" style="left:326px;top:377px;color:#000"><i style="color:#008000"> */</i></span>
<span class="mono" style="left:292px;top:393px;color:#000">79</span>
<span class="mono" style="left:326px;top:393px;color:#000"><i style="color:#0000FF">int</i> main(<i style="color:#0000FF">void</i>)</span>
<span class="mono" style="left:292px;top:409px;color:#000">80</span>
<span class="mono" style="left:326px;top:409px;color:#000">{</span>
<div style="left:318px;top:233px;width:1px;height:32px;background:#808080"></div>
<div style="left:318px;top:279px;width:1px;height:58px;background:#808080"></div><div style="left:318px;top:304px;width:5px;height:1px;background:#808080"></div>
<div style="left:318px;top:345px;width:1px;height:0px;background:#808080"></div>
<div style="left:313px;top:268px;width:11px;height:11px;background:#fff;border:1px solid #808080"></div><div style="left:315px;top:273px;width:7px;height:1px;background:#606060"></div>
<div style="left:318px;top:336px;width:5px;height:1px;background:#808080"></div>
<div style="left:313px;top:348px;width:11px;height:11px;background:#fff;border:1px solid #808080"></div><div style="left:315px;top:353px;width:7px;height:1px;background:#606060"></div>
<div style="left:318px;top:359px;width:1px;height:25px;background:#808080"></div><div style="left:318px;top:384px;width:5px;height:1px;background:#808080"></div>
<div style="left:313px;top:412px;width:11px;height:11px;background:#fff;border:1px solid #808080"></div><div style="left:315px;top:417px;width:7px;height:1px;background:#606060"></div>
<svg style="left:251px;top:409px" width="20" height="13" viewBox="0 0 20 13"><path d="M0.5 0.5L8.5 6.5L0.5 12.5Z" fill="#40F0F8" stroke="#002A40"/><path d="M8.5 0.5L16.5 6.5L8.5 12.5Z" fill="#FFFF00" stroke="#303000"/></svg>
</body></html>
